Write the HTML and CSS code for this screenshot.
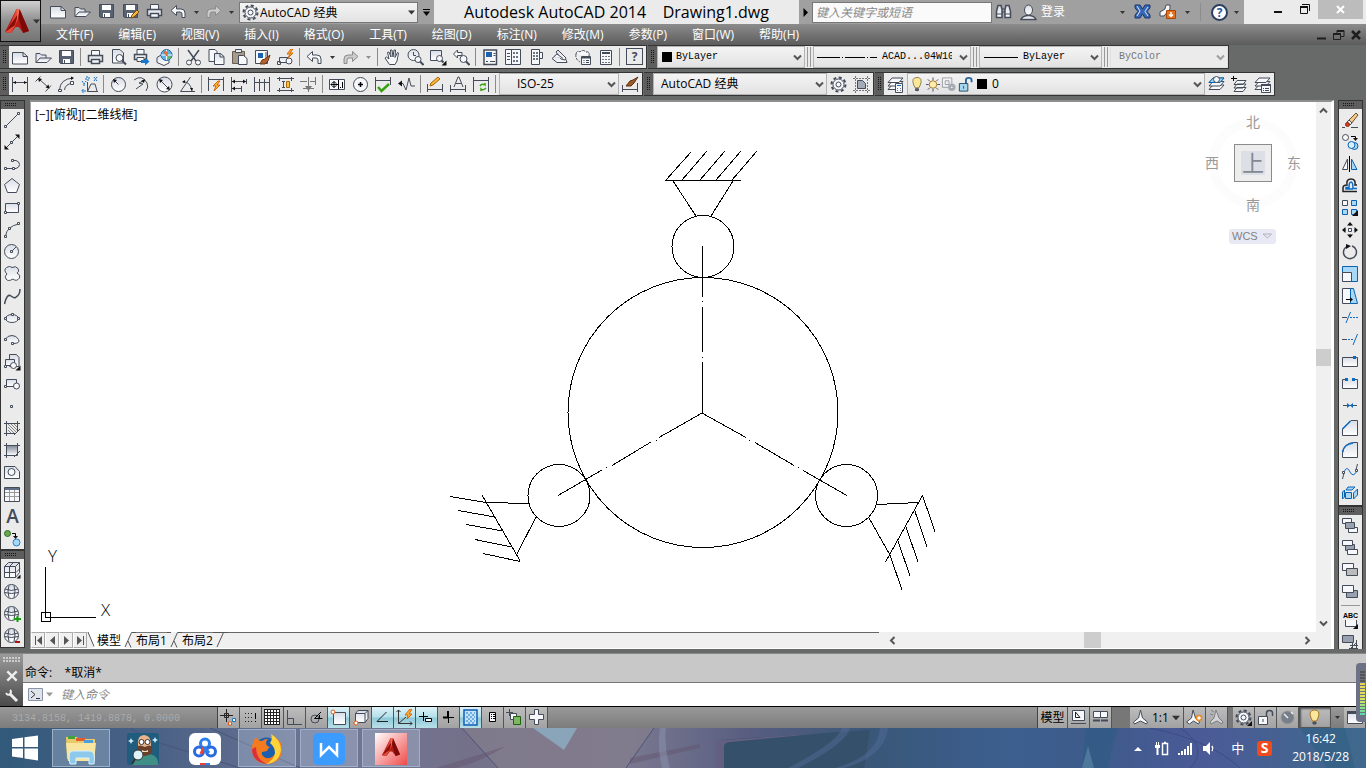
FILE: index.html
```
<!DOCTYPE html>
<html lang="zh-CN">
<head>
  <meta charset="UTF-8">
  <title>Autodesk AutoCAD 2014 Drawing1.dwg</title>
  <link rel="stylesheet" href="styles.css">
</head>
<body>

<!-- shared icons -->
<svg class="sprite" aria-hidden="true">
  <defs>
    <linearGradient id="paper" x1="0" y1="0" x2="0" y2="1"><stop offset="0" stop-color="#d8dde6"/><stop offset="1" stop-color="#fff"/></linearGradient>
    <linearGradient id="red" x1="0" y1="0" x2="1" y2="1"><stop offset="0" stop-color="#fff"/><stop offset="1" stop-color="#f04a4a"/></linearGradient>
    <linearGradient id="shade" x1="0" y1="0" x2="0" y2="1"><stop offset="0" stop-color="#7d8696"/><stop offset="1" stop-color="#fff"/></linearGradient>
  </defs>
  <symbol id="new" viewBox="0 0 17 17"><path class="p" d="M.5 3.500H11l4.500 4v7.500H.500z"/><path d="M11 3.500v4h4.500"/></symbol>
  <symbol id="open" viewBox="0 0 17 17"><path class="p" d="M1 13.500v-9h4l1.500 1.500H11v3"/><path class="p" d="M1 13.500 5 9h11.500L12 13.500z"/></symbol>
  <symbol id="save" viewBox="0 0 17 17"><path class="dk" d="M1.500 1.500h14v13h-13l-1-1z"/><path class="wh" d="M4 2h9v5H4z"/><path class="wh" d="M5 10h7v4H5z"/><path d="M6.500 11v3"/></symbol>
  <symbol id="print" viewBox="0 0 17 17"><path class="w" d="M4.500 6.500v-5h8v5"/><path class="p" stroke-width="1.500" d="M1.500 6.500h14v6h-14z"/><path class="w" stroke-width="1.500" d="M4.500 10.500h8v4h-8z"/></symbol>
  <symbol id="undo" viewBox="0 0 17 17"><path class="w" d="M1 7.500 6.500 2.500V6H11q4 0 4 4v4.500h-3V11q0-2-2-2H6.500v3.500z"/></symbol>
  <symbol id="redo" viewBox="0 0 17 17"><path d="M16 7.500 10.500 2.500V6H6Q2 6 2 10v4.500h3V11q0-2 2-2h3.500v3.500z" stroke="#8c8c8c" fill="#ccc"/></symbol>
  <symbol id="gear" viewBox="0 0 17 17"><circle cx="8.500" cy="8.500" r="7" stroke-width="2" stroke-dasharray="3 2.500"/><circle class="w" cx="8.500" cy="8.500" r="5.500"/><circle class="w" cx="8.500" cy="8.500" r="2.500"/></symbol>
  <symbol id="chev" viewBox="0 0 9 9"><path d="M1 2.500 4.500 6 8 2.500" stroke="#555" stroke-width="2" fill="none"/></symbol>
  <symbol id="tri" viewBox="0 0 7 7"><path d="M0 1.500h7L3.500 5.500z" fill="#333" stroke="none"/></symbol>
  <symbol id="layers" viewBox="0 0 17 17"><path class="w" d="M1 13.500 5 9h11l-4 4.500z"/><path class="w" d="M1 10 5 5.500h11L12 10z"/><path class="w" d="M1 6.500 5 2h11l-4 4.500z"/></symbol>
  <symbol id="globe" viewBox="0 0 17 17"><circle class="p" cx="7.500" cy="7.500" r="7"/><path d="M1 5q6.500 3 13 0M.5 8.500q7 2 14 0M5 1.500Q3 7 5 13.500M10 1.500q2 5.500 0 12"/></symbol>
  <symbol id="autocad" viewBox="0 0 32 32"><path d="M15.500 4 4 27l6 1 4.500-6h3l5 6L28 26 18.500 4z" fill="#b51a14"/><path d="M15.500 4 10 18l-6 9 6 1 5-9 3-9z" fill="#e2493a"/><path d="M17 9 4 27l10-7z" fill="#8c0c09"/><path d="M18.500 4 17 11l5 17 6-2z" fill="#7e0a08"/><path d="M15.500 4h3l-2 13z" fill="#f06a55"/></symbol>
</svg>

<header class="head">
  <button class="logo" aria-label="应用程序菜单"><svg class="logo-mark"><use href="#autocad"/></svg><svg class="tri"><use href="#tri"/></svg></button>
  <div class="head-bars">
    <div class="titlebar">
      <div class="quick">
        <button class="tool" aria-label="新建"><svg><use href="#new"/></svg></button>
        <button class="tool" aria-label="打开"><svg><use href="#open"/></svg></button>
        <button class="tool" aria-label="保存"><svg><use href="#save"/></svg></button>
        <button class="tool" aria-label="另存为"><svg><use href="#save"/><path d="m9 15 1-3 5-5 2 2-5 5z" fill="#f9b53a" stroke="#7a4a10"/></svg></button>
        <button class="tool" aria-label="打印"><svg><use href="#print"/></svg></button>
        <button class="tool" aria-label="放弃"><svg><use href="#undo"/></svg></button>
        <button class="drop" aria-label="放弃列表"><svg class="tri small"><use href="#tri"/></svg></button>
        <button class="tool" aria-label="重做"><svg><use href="#redo"/></svg></button>
        <button class="drop" aria-label="重做列表"><svg class="tri small"><use href="#tri"/></svg></button>
        <label class="combo combo-top">
          <svg class="ico"><use href="#gear"/></svg>
          <select aria-label="工作空间"><option>AutoCAD 经典</option></select>
          <svg class="tri"><use href="#tri"/></svg>
        </label>
        <button class="drop more" aria-label="自定义"><svg viewBox="0 0 9 9"><path d="M1 1.500h7" stroke="#000"/><path d="M1 3.500h7L4.500 8z" fill="#000" stroke="none"/></svg></button>
      </div>
      <h1 class="title">Autodesk AutoCAD 2014 &nbsp;&nbsp; Drawing1.dwg</h1>
      <div class="info">
        <button class="drop more" aria-label="展开"><svg viewBox="0 0 9 9"><path d="M2.500 0v9L7 4.500z" fill="#000" stroke="none"/></svg></button>
        <input class="search" type="text" placeholder="键入关键字或短语" aria-label="搜索">
        <button class="tool" aria-label="搜索"><svg viewBox="0 0 17 17"><path class="p" stroke-width="1.500" d="M3 2.500h3l1 4v8H1.500v-6zM11 2.500h3l1.500 6v6H10v-8z"/><path d="M7 6h3M7 9h3M2 11h5M10 11h5"/></svg></button>
        <button class="login"><svg viewBox="0 0 17 17"><path class="p" d="M1 15.500q1-3 6-4h3q5 1 6 4z" stroke-width="1.500"/><ellipse class="p" cx="8.500" cy="6" rx="4" ry="5"/></svg>登录</button>
        <button class="drop push" aria-label="登录菜单"><svg class="tri small"><use href="#tri"/></svg></button>
        <button class="tool exch" aria-label="Exchange"><svg viewBox="0 0 17 17"><path d="M1 2h5l2.500 4L11 2h5v3l-3 3.500 3 3.500v3h-5l-2.500-4L6 15H1v-3l3-3.500L1 5z" fill="#3567b5" stroke="#1a376f"/><path d="m3 3 3 5-3 5M14 4l-3 4.500 3 4.500" stroke="#dfe9f8"/></svg></button>
        <button class="tool" aria-label="更新"><svg viewBox="0 0 17 17"><path class="w" d="M7 2h4v4l-6 7H1V9l5-3z"/><path d="M7.500 7.500h9v8h-9z" fill="#e8701a" stroke="#a84808"/><path d="M12 9v4M10 11.500l2 2 2-2" stroke="#fff" stroke-width="1.500"/></svg></button>
        <button class="drop" aria-label="更新菜单"><svg class="tri small"><use href="#tri"/></svg></button>
        <span class="vline"></span>
        <button class="help" aria-label="帮助">?</button>
        <button class="drop helpdrop" aria-label="帮助菜单"><svg class="tri small"><use href="#tri"/></svg></button>
      </div>
      <div class="window-buttons">
        <button aria-label="最小化"><svg viewBox="0 0 17 17"><path d="M5 12h8" stroke-width="2"/></svg></button>
        <button aria-label="还原"><svg viewBox="0 0 17 17"><path d="M4.500 6.500h7v7h-7zM6 4.500h7.500V11"/><path d="M4 7h8" stroke-width="2"/></svg></button>
        <button class="close" aria-label="关闭"><svg viewBox="0 0 17 17"><path d="m5 6 7 7M12 6l-7 7" stroke="#fff" stroke-width="2"/></svg></button>
      </div>
    </div>
    <nav class="menubar">
      <button>文件(F)</button>
      <button>编辑(E)</button>
      <button>视图(V)</button>
      <button>插入(I)</button>
      <button>格式(O)</button>
      <button>工具(T)</button>
      <button>绘图(D)</button>
      <button>标注(N)</button>
      <button>修改(M)</button>
      <button>参数(P)</button>
      <button>窗口(W)</button>
      <button>帮助(H)</button>
      <span class="doc-buttons">
        <button aria-label="最小化图形"><svg viewBox="0 0 12 12"><path d="M1 9.500h9" stroke-width="2"/></svg></button>
        <button aria-label="还原图形"><svg viewBox="0 0 12 12"><path d="M.5 4.500h7v6h-7zM4 4V1.500h7v6H8"/><path d="M0 5h8M4 2h7" stroke-width="2"/></svg></button>
        <button aria-label="关闭图形"><svg viewBox="0 0 12 12"><path d="m2 2 8 8M10 2l-8 8" stroke-width="2.500"/></svg></button>
      </span>
    </nav>
  </div>
</header>

<div class="toolbars">
  <div class="toolrow">
    <div class="panel">
      <span class="grip"></span>
      <button class="tool" aria-label="新建"><svg><use href="#new"/></svg></button>
      <button class="tool" aria-label="打开"><svg><use href="#open"/></svg></button>
      <button class="tool" aria-label="保存"><svg><use href="#save"/></svg></button>
      <span class="sep"></span>
      <button class="tool" aria-label="打印"><svg><use href="#print"/></svg></button>
      <button class="tool" aria-label="打印预览"><svg viewBox="0 0 17 17"><path class="p" d="M2.500.5H10l3.500 3.500v10h-11z"/><circle class="w" cx="9.500" cy="9" r="3.500"/><path d="m12 11.500 4 4" stroke-width="2"/></svg></button>
      <button class="tool" aria-label="发布"><svg viewBox="0 0 17 17"><path class="w" d="M4 5V.5h7V5"/><path class="p" d="M1.500 5.500h12v5h-12z" stroke-width="1.500"/><path class="w" d="M4 8.500h7v4H4z"/><path d="M8 11h4V8.500l4.500 4-4.500 4V14H8z" fill="#1377cf" stroke="none"/></svg></button>
      <button class="tool" aria-label="三维打印"><svg viewBox="0 0 17 17"><path class="p" d="M1 8.500 5 6l8 3v5l-5 2.500-7-3z"/><circle cx="10.500" cy="6" r="5.500" fill="#58b4e6" stroke="#27679f"/><path d="M10.500 1v10M5 6h11" stroke="#fff"/><path d="M8 3h3v4z" fill="#f0c33a" stroke="#e24a1c"/><path d="M12 7.500h3v2h-3z" fill="#5fb54a" stroke="none"/></svg></button>
      <span class="sep"></span>
      <button class="tool" aria-label="剪切"><svg viewBox="0 0 17 17"><path d="m3 1 8 11M14 1 6 12" stroke-width="1.500"/><circle class="w" cx="4" cy="13.500" r="2.500"/><circle class="w" cx="13" cy="13.500" r="2.500"/></svg></button>
      <button class="tool" aria-label="复制"><svg viewBox="0 0 17 17"><path class="w" d="M1 .5h6l2 2v10H1z"/><path class="p" d="M6.500 4.500h6l3.500 3v8H6.500z"/><path d="M12 4.500V8h4"/></svg></button>
      <button class="tool" aria-label="粘贴"><svg viewBox="0 0 17 17"><path d="M1.500 2.500h12v12h-12z" fill="#a59b8d" stroke="#675d50"/><path class="p" d="M4.500.5h6v3h-6z"/><path class="w" d="M7.500 6.500h5l3.500 3v6H7.500z"/></svg></button>
      <button class="tool" aria-label="特性匹配"><svg viewBox="0 0 17 17"><path class="w" d="M1.500 1.500h12v13h-12z"/><path d="M4 4h5v5H4z" fill="#1c62ad" stroke="none"/><path d="M11 4h2M11 6h2M11 8h2"/><path d="m8 11 3-1 5-4-2 6-3 3H6z" fill="#b4622b" stroke="#6c3817"/></svg></button>
      <button class="tool" aria-label="块编辑器"><svg viewBox="0 0 17 17"><path class="p" d="M2.500 8.500h9v5h-9z"/><circle class="w" cx="12" cy="12" r="3"/><path d="M.5 12.500h3v3h-3z"/><path d="m14 0-4 5h3l-2 4 5-5h-3l3-4z" fill="#f9b53a" stroke="#d9650b"/></svg></button>
      <span class="sep"></span>
      <button class="tool" aria-label="放弃"><svg><use href="#undo"/></svg></button>
      <button class="drop" aria-label="放弃列表"><svg class="tri small"><use href="#tri"/></svg></button>
      <button class="tool" aria-label="重做"><svg><use href="#redo"/></svg></button>
      <button class="drop off" aria-label="重做列表"><svg class="tri small"><use href="#tri"/></svg></button>
      <span class="sep"></span>
      <button class="tool" aria-label="平移"><svg viewBox="0 0 17 17"><path class="w" d="M5.500 15.500 1 9l1.500-1L5 10 3.500 3.500 5 3l2 5-.5-7H8l1 7 1-7h1.500L11 8.500l2.500-5 1 .5L13 12l-2 3.500z"/></svg></button>
      <button class="tool" aria-label="实时缩放"><svg viewBox="0 0 17 17"><circle class="p" cx="6.500" cy="6" r="5.500"/><path d="M6.500 3v3.500H9"/><circle class="w" cx="11" cy="10.500" r="3"/><path d="m13 12.500 3.500 3.500" stroke-width="2"/></svg></button>
      <button class="tool" aria-label="窗口缩放"><svg viewBox="0 0 17 17"><path class="p" d="M.5 1.500h11v10H.500z"/><circle class="w" cx="9.500" cy="9.500" r="3"/><path d="m11.500 11.500 2 2" stroke-width="2"/><path class="k" d="M16.500 11.500v5h-5z"/></svg></button>
      <button class="tool" aria-label="缩放上一个"><svg viewBox="0 0 17 17"><path class="w" d="m.5 5 4-4v2.500H9v3H4.500V9z"/><circle class="w" cx="10.500" cy="10" r="3.500"/><path d="m13 12.500 3.500 3.500" stroke-width="2"/></svg></button>
      <span class="sep"></span>
      <button class="tool" aria-label="特性"><svg viewBox="0 0 17 17"><path class="w" stroke-width="1.500" d="M2 1h12.500v14.500H2z"/><path d="M4 3h6v5H4z" fill="#1c62ad" stroke="none"/><path d="M11.500 4.500h2M11.500 6.500h2M4 12.500h2M8 12.500h5"/></svg></button>
      <button class="tool" aria-label="设计中心"><svg viewBox="0 0 17 17"><path class="w" d="M.5.5h15v15H.500z"/><path d="M2 4.500h3M2 7.500h3M2 10.500h3M6.500 1v14"/><path class="s" d="M8 3h2v2H8zm3 0h2v2h-2zM8 7h2v2H8zm3 0h2v2h-2zM8 11h2v2H8zm3 0h2v2h-2z"/></svg></button>
      <button class="tool" aria-label="工具选项板"><svg viewBox="0 0 17 17"><path class="w" d="M3.500.5h8v15h-8zM11.500 3.500h3v6h-3z"/><path class="s" d="M5 3h2v2H5zm3 0h2v2H8zM5 6h2v2H5zm3 0h2v2H8zM5 9h2v2H5zm3 0h2v2H8z"/></svg></button>
      <button class="tool" aria-label="图纸集"><svg viewBox="0 0 17 17"><path class="p" d="M1 9.500 4 7l4 1 7 2.500 1 3H6z"/><path class="p" d="m5 3 2-2 8 8-1 2-4-1z"/><path class="w" d="M3 7.500 6 5l6 4.500"/></svg></button>
      <button class="tool" aria-label="标记集"><svg viewBox="0 0 17 17"><path class="w" stroke-dasharray="3 1" d="M2 5q1-4 4-2 3-3 6 0 4-1 3 4M2 5q-1 5 4 8"/><path class="w" d="M7.500 7.500h9v8h-9z"/><path d="M8 8.500h8" stroke-width="2"/><path d="M9.500 11.500h1M12 11.500h3M9.500 13.500h1M12 13.500h3"/></svg></button>
      <button class="tool" aria-label="快速计算器"><svg viewBox="0 0 17 17"><path class="w" d="M3.500 1.500h11v14h-11z"/><path d="M5 4h8" stroke-width="2"/><path class="s" d="M5 7h2v1H5zm3 0h2v1H8zm3 0h2v1h-2zM5 10h2v1H5zm3 0h2v1H8zm3 0h2v1h-2zM5 13h2v1H5zm3 0h2v1H8zm3 0h2v1h-2z"/></svg></button>
      <span class="sep"></span>
      <button class="tool boxed" aria-label="帮助">?</button>
    </div>

    <div class="panel">
      <span class="grip"></span>
      <label class="combo w-color"><span class="swatch"></span><select class="mono" aria-label="颜色"><option>ByLayer</option></select><svg class="chev"><use href="#chev"/></svg></label>
      <span class="dsep"></span>
      <label class="combo w-linetype"><svg class="dash" viewBox="0 0 60 3"><path d="M0 1.500h23M25 1.500h1M28 1.500h20M50 1.500h1M53 1.500h7"/></svg><select class="mono" aria-label="线型"><option>ACAD...04W100</option></select><svg class="chev"><use href="#chev"/></svg></label>
      <span class="dsep"></span>
      <label class="combo w-weight"><span class="line"></span><select class="mono" aria-label="线宽"><option>ByLayer</option></select><svg class="chev"><use href="#chev"/></svg></label>
      <span class="dsep"></span>
      <label class="combo w-plot"><select class="mono" aria-label="打印样式" disabled><option>ByColor</option></select><svg class="chev off"><use href="#chev"/></svg></label>
    </div>
  </div>

  <div class="toolrow">
    <div class="panel">
      <span class="grip"></span>
      <button class="tool" aria-label="线性"><svg viewBox="0 0 17 17"><path d="M.5 1v15M15.500 1v15M1 6.500h15"/><path class="k" d="M1 6.500 4 5v3zM15 6.500 12 5v3z"/></svg></button>
      <button class="tool" aria-label="对齐"><svg viewBox="0 0 17 17"><path d="m.5 5.500 5-5M10.500 15.500l5.500-6M4 3l10 9"/><path class="k" d="m3 2 4 1-3 3zM14.500 12.500l-4-1 3-3z"/></svg></button>
      <button class="tool" aria-label="弧长"><svg viewBox="0 0 17 17"><path d="M1.500 14Q2 3 15 2M6.500 14Q7 8 15 7"/><path class="w" d="M.5 13.500h3v2h-3zM12.500 5.500h3v3h-3z"/><path class="k" d="M13 .5 16 2l-3 2z"/></svg></button>
      <button class="tool" aria-label="坐标"><svg viewBox="0 0 17 17"><path d="M6.500 6v9.500H17M6.500 15.500 10 8h4M14 8l2 7"/><path class="bl" d="m1 5 2 3 2-3M3 8v3M13 1l3 4M16 1l-3 4M1 14h3v2H1zM5 1h3v3H5z" stroke-dasharray="2 1"/></svg></button>
      <span class="sep"></span>
      <button class="tool" aria-label="半径"><svg viewBox="0 0 17 17"><circle class="p" cx="8.500" cy="8.500" r="7"/><path d="M8.500 8.500 4 4"/><path class="k" d="m3 3 4 1-3 3z"/></svg></button>
      <button class="tool" aria-label="折弯"><svg viewBox="0 0 17 17"><path d="M1 4q8-6 13 3 2 4-1 8M3 13l7-5-4-1 6-3"/><path class="k" d="m12 3-1 4-3-2z"/></svg></button>
      <button class="tool" aria-label="直径"><svg viewBox="0 0 17 17"><circle class="p" cx="8.500" cy="8.500" r="7.500"/><path d="m4 4 9 9"/><path class="k" d="m3 3 4 1-3 3zM14 14l-4-1 3-3z"/></svg></button>
      <button class="tool" aria-label="角度"><svg viewBox="0 0 17 17"><path d="m11.500 1-10 14.500H16M4 6q7-1 9 9"/><path class="k" d="m3 6 3-2v3zM13 15l-2-3h3z"/></svg></button>
      <span class="sep"></span>
      <button class="tool" aria-label="快速标注"><svg viewBox="0 0 17 17"><path d="M.5 1v14M15.500 1v14M1 3.500h15"/><path d="m10 5-5 5h3l-2 5 6-6H9l3-4z" fill="#f9b53a" stroke="#d9650b"/></svg></button>
      <button class="tool" aria-label="基线"><svg viewBox="0 0 17 17"><path d="M.5 1v15M10.500 10v6M1 5.500h14M1 12.500h9M15.500 3v5"/><path class="k" d="m1 5.500 3-2v4zM1 12.500l3-2v4zM15 5.500l-3-2v4z"/></svg></button>
      <button class="tool" aria-label="连续"><svg viewBox="0 0 17 17"><path d="M.5 1v15M5.500 3v12M10.500 3v12M15.500 1v15M1 6.500h15"/></svg></button>
      <button class="tool" aria-label="等距标注"><svg viewBox="0 0 17 17"><path d="M0 2.500h17M0 14.500h17M2.500 1v4M14.500 1v4M2.500 12v4M14.500 12v4M5 5.500h3M6.500 5v7M5 11.500h3"/><path d="M9.500 5.500h3v6h-3z" fill="#f9c33a" stroke="#a86708"/></svg></button>
      <button class="tool" aria-label="折断标注"><svg viewBox="0 0 17 17"><path d="M0 5.500h7M10 5.500h6M15.500 1v8M8.500 1v15M3 12.500h11" stroke="#777"/><path d="m5 10 3.500 5L12 10z" fill="#777" stroke="none"/></svg></button>
      <span class="sep"></span>
      <button class="tool" aria-label="公差"><svg viewBox="0 0 17 17"><path class="w" d="M.5 3.500h15v10H.500z"/><circle cx="5" cy="8.500" r="2.500"/><path d="M5 5v7M1.500 8.500H9M9.500 4v9M11.500 11v1M13.500 6v6" stroke="#000"/></svg></button>
      <button class="tool" aria-label="圆心标记"><svg viewBox="0 0 17 17"><circle class="w" cx="8.500" cy="8.500" r="7"/><path d="M8.500 6v5M6 8.500h5" stroke="#000" stroke-width="1.500"/></svg></button>
      <button class="tool" aria-label="检验"><svg viewBox="0 0 17 17"><path d="M.5 1v14M15.500 1v8M1 4.500h15"/><path d="m3 11 3.500 4L14 8" stroke="#37a010" stroke-width="2.500"/></svg></button>
      <button class="tool" aria-label="折弯线性"><svg viewBox="0 0 17 17"><path d="M1 7.500h4L8 14l3-12 2 8h4"/><path class="k" d="m0 7.500 4-3v6z"/></svg></button>
      <span class="sep"></span>
      <button class="tool" aria-label="编辑标注"><svg viewBox="0 0 17 17"><path d="M.5 8v8M15.500 8v8M1 13.500h14"/><path d="m3 10 1-3 7-6 2 2-7 6z" fill="#f9b53a" stroke="#a86708"/></svg></button>
      <button class="tool" aria-label="编辑标注文字"><svg viewBox="0 0 17 17"><path d="M.5 9v7M15.500 9v7M1 13.500h14M4 11l4-10h1l4 10M6 7.500h5"/></svg></button>
      <button class="tool" aria-label="标注更新"><svg viewBox="0 0 17 17"><path d="M.5 1v15M15.500 1v15M1 4.500h14"/><path d="M7 10q2-3 5-1v-2M13 12q-3 3-5 1v2" stroke="#37a010" stroke-width="1.500"/></svg></button>
      <span class="sep"></span>
      <label class="combo w-dim"><select aria-label="标注样式"><option>ISO-25</option></select><svg class="chev"><use href="#chev"/></svg></label>
      <button class="tool" aria-label="标注样式管理"><svg viewBox="0 0 17 17"><path d="M.5 9v7M15.500 7v9M1 13.500h14"/><path d="m16 1-5 3-3 1-4 5h5l3-3z" fill="#9a5a2a" stroke="#5c3010"/></svg></button>
    </div>

    <div class="panel">
      <span class="grip"></span>
      <label class="combo w-space"><select aria-label="工作空间"><option>AutoCAD 经典</option></select><svg class="chev"><use href="#chev"/></svg></label>
      <button class="tool" aria-label="工作空间设置"><svg><use href="#gear"/></svg></button>
      <button class="tool" aria-label="我的工作空间"><svg viewBox="0 0 17 17"><path d="M0 2.500h17M0 14.500h17M2.500 0v17M14.500 0v17" stroke="#777" stroke-dasharray="2 1"/><path d="M4.500 4.500h5l3 3v5h-8z" fill="#a3abb8"/></svg></button>
    </div>

    <div class="panel">
      <span class="grip"></span>
      <button class="tool" aria-label="图层特性"><svg viewBox="0 0 17 17"><use href="#layers"/><path class="w" d="M8.500 7.500h7v9h-7z"/><path class="bl" d="M10 9.500h4"/><path class="s" d="M10 12h1v1h-1zm3 0h1v1h-1zm-3 2h1v1h-1zm3 0h1v1h-1z"/></svg></button>
      <label class="combo w-layer">
        <svg class="ico" viewBox="0 0 17 17"><path d="M5 9Q2 1 8.500 1T12 9l-1.500 3h-4z" fill="#fbe79a" stroke="#8a7a4a"/><path class="dk" d="M7 13h3v2H7z"/></svg>
        <svg class="ico" viewBox="0 0 17 17"><path d="M8.500 1v3M8.500 13v3M1 8.500h3M13 8.500h3M3 3l2 2M14 3l-2 2M3 14l2-2M14 14l-2-2"/><circle cx="8.500" cy="8.500" r="4" fill="#fdeeb0" stroke="#a5752a"/></svg>
        <svg class="ico faded" viewBox="0 0 17 17"><path class="w" d="M1.500 1.500h10v10h-10zM4.500 4.500h4v4h-4z"/><circle class="s" cx="11.500" cy="11.500" r="4"/><circle class="w" cx="11.500" cy="11.500" r="1.500"/></svg>
        <svg class="ico" viewBox="0 0 17 17"><path d="M9.500 8V4q0-2.500 3-2.500T15.500 4v2" stroke="#27679f" stroke-width="2"/><path d="M2.500 7.500h9v8h-9z" fill="#a8d8f0" stroke="#27475f"/><path d="M7 10v3"/></svg>
        <span class="swatch"></span>
        <select aria-label="图层"><option>0</option></select><svg class="chev"><use href="#chev"/></svg>
      </label>
      <button class="tool" aria-label="置为当前"><svg viewBox="0 0 17 17"><use href="#layers"/><path d="M1 6.500 5 2h11l-4 4.500z" fill="#9fd3ef" stroke="#0a63b0"/><circle class="w" cx="8.500" cy="3.500" r="3"/></svg></button>
      <button class="tool" aria-label="上一个图层"><svg viewBox="0 0 17 17"><path class="w" d="m3 15.500 3-4h9l-3 4zM3 12l3-4h9l-3 4zM3 8.500l3-4h9l-3 4z"/><path d="M0 2.500h6M2.500 0v5" stroke="#000"/></svg></button>
      <button class="tool" aria-label="图层状态"><svg viewBox="0 0 17 17"><use href="#layers"/><path class="w" d="M7.500 8.500h9v8h-9z"/><path d="M7 9h10" stroke-width="2"/><path d="M9 12.500h1M11 12.500h4M9 14.500h1M11 14.500h4"/></svg></button>
    </div>
  </div>
</div>

<main class="workspace">
  <aside class="side">
    <div class="panel vertical">
      <span class="grip"></span>
      <button class="tool" aria-label="直线"><svg viewBox="0 0 17 17"><path d="m2 14 12-12"/><path class="w" d="M.5 13.500h2v2h-2zM13.500.5h2v2h-2z"/></svg></button>
      <button class="tool" aria-label="构造线"><svg viewBox="0 0 17 17"><path d="M2 14 14 2"/><path class="w" d="M6.500 7.500h2v2h-2z"/><path class="k" d="M.5 11v4.500H5zM15.500 5V.500H11z"/></svg></button>
      <button class="tool" aria-label="多段线"><svg viewBox="0 0 17 17"><path d="M2 12.500h10q3.500-1 3.500-4T12 4.500H9"/><path class="w" d="M.5 11.500h2v2h-2zM8.500 11.500h2v2h-2zM7.500 3.500h2v2h-2z"/></svg></button>
      <button class="tool" aria-label="多边形"><svg viewBox="0 0 17 17"><path class="p" d="M8 .5 15.500 6.500 12.500 14.500h-9L.5 6.500z"/></svg></button>
      <button class="tool" aria-label="矩形"><svg viewBox="0 0 17 17"><path class="p" d="M1.500 3.500h13v9h-13z"/><path class="w" d="M.5 11.500h2v2h-2zM13.500 2.500h2v2h-2z"/></svg></button>
      <button class="tool" aria-label="圆弧"><svg viewBox="0 0 17 17"><path d="M1.500 14Q3 4 15 2"/><path class="w" d="M.5 13.500h2v2h-2zM4.500 5.500h2v2h-2zM13.500.5h2v2h-2z"/></svg></button>
      <button class="tool" aria-label="圆"><svg viewBox="0 0 17 17"><circle class="p" cx="7.500" cy="7.500" r="7"/><path d="m8 7 4-4"/><path class="w" d="M6.500 6.500h2v2h-2z"/></svg></button>
      <button class="tool" aria-label="修订云线"><svg viewBox="0 0 17 17"><path class="p" d="M3 8Q-1 4 2.500 1.500 6-1 8 1.500q4-2 6 1 2 3-1 4.500 4 2 2.500 5-3 4-6.500 1-5 3-7 0-2-3 1-5z"/></svg></button>
      <button class="tool" aria-label="样条曲线"><svg viewBox="0 0 17 17"><path d="M.5 16Q3 5 7 8t5 1q4-2 4-8" stroke-width="1.500"/></svg></button>
      <button class="tool" aria-label="椭圆"><svg viewBox="0 0 17 17"><ellipse class="p" cx="8" cy="8.500" rx="6.500" ry="4"/><path class="w" d="M.5 7.500h2v2h-2zM13.500 7.500h2v2h-2zM7.500 3.500h2v2h-2z"/></svg></button>
      <button class="tool" aria-label="椭圆弧"><svg viewBox="0 0 17 17"><path class="p" d="M1.500 7q2-3.500 6.500-3.500t6.500 4T9 11.500"/><path class="w" d="M.5 6.500h2v2h-2zM7.500 10.500h2v2h-2z"/></svg></button>
      <button class="tool" aria-label="插入块"><svg viewBox="0 0 17 17"><path class="p" d="M5.500.5h7l2.500 3v9H5.500z"/><path class="p" d="M1.500 5.500h9v6h-9z"/><circle class="w" cx="9.500" cy="11.500" r="3"/><path class="w" d="M.5 11.500h2v2h-2z"/><path class="k" d="M16.500 11.500v5h-5z"/></svg></button>
      <button class="tool" aria-label="创建块"><svg viewBox="0 0 17 17"><path class="p" d="M2.500 3.500h10v7h-10z"/><circle class="w" cx="12.500" cy="10" r="3"/><path class="w" d="M.5 9.500h2v2h-2z"/></svg></button>
      <button class="tool" aria-label="点"><svg viewBox="0 0 17 17"><path class="w" d="M6.500 7.500h2v2h-2z"/></svg></button>
      <button class="tool" aria-label="图案填充"><svg viewBox="0 0 17 17"><path d="m4 4 8 8M4 7l6 6M7 4l6 6M10 4l3 3M4 10l3 3" stroke="#888"/><path d="M2.500 1v15M13.500 1v11M0 3.500h16M0 13.500h11M10 15l6-6"/></svg></button>
      <button class="tool" aria-label="渐变色"><svg viewBox="0 0 17 17"><path d="M2.500 3.500h11v10h-11z" fill="url(#shade)"/><path d="M2.500 1v15M13.500 1v11M0 3.500h16M0 13.500h11M10 15l6-6"/></svg></button>
      <button class="tool" aria-label="面域"><svg viewBox="0 0 17 17"><path class="p" d="M.5 2.500H11l4.500 5v7H.500z"/><circle class="w" cx="7.500" cy="8" r="3.500"/></svg></button>
      <button class="tool" aria-label="表格"><svg viewBox="0 0 17 17"><path class="w" d="M.5 1.500h15v14H.500z"/><path d="M1 3h14" stroke-width="2" stroke="#607089"/><path d="M1 6.500h14M1 10.500h14M5.500 4v11M10.500 4v11" stroke="#999"/></svg></button>
      <button class="tool letter" aria-label="多行文字">A</button>
      <button class="tool" aria-label="添加选定对象"><svg viewBox="0 0 17 17"><circle cx="3.500" cy="3.500" r="3" fill="#6aa84f" stroke="#2f6a1f"/><circle cx="12.500" cy="12.500" r="3.500" fill="#a8d8f5" stroke="#2a80c9"/><path d="M8 3.500h3.500V7" stroke="#000"/><path class="k" d="M9 6h5l-2.500 3z"/></svg></button>
    </div>
    <div class="panel vertical">
      <span class="grip"></span>
      <button class="tool" aria-label="线框"><svg viewBox="0 0 17 17"><path class="p" d="M.5 4.500h11v11H.500zM.5 4.500 4.500.5h11l-4 4M15.500.5v10l-4 5M5.500 4.500v11M1 10.500h11l4-4M9.500.5l-4 4"/><path class="k" d="M16.500 12.500v4h-4z"/></svg></button>
      <button class="tool" aria-label="地理位置"><svg><use href="#globe"/></svg></button>
      <button class="tool" aria-label="添加光源"><svg viewBox="0 0 17 17"><use href="#globe"/><path d="M10 13h7M13.500 10v6" stroke="#18a010" stroke-width="2"/></svg></button>
      <button class="tool" aria-label="删除光源"><svg viewBox="0 0 17 17"><use href="#globe"/><path d="M11 14h5" stroke="#b01010" stroke-width="2"/></svg></button>
    </div>
  </aside>

  <section class="frame">
    <div class="view">
      <div class="canvas">
        <svg class="drawing" viewBox="31 102 1285 530" preserveAspectRatio="xMinYMin">
          <!-- main disc and axes -->
          <circle cx="703" cy="412.500" r="135"/>
          <path d="M702.500 246v51M702.500 301v1M702.500 307v45M702.500 357v1M702.500 362v51"/>
          <path d="m702 413-43 24.500M657 440h-1M651 442l-39 23.500M607 467.500h-1M602 470l-44 25.500"/>
          <path d="m702 413 44 24.500M749 440.500h1M755 442.500l39 23M798 467.500h1M803 470.500l44 25"/>
          <!-- top support -->
          <circle cx="703" cy="246.500" r="31"/>
          <path d="M665 180.500h76M673 181l23 35M733 181l-22 35"/>
          <path d="m666 180 25-28M682 180l25-29M700 180l25-29M716 180l25-29M732 180l25-29"/>
          <!-- left support -->
          <circle cx="559" cy="495.500" r="31"/>
          <path d="m482 495 38.500 66.500M529 503.500l-43-1M536 517l-19 37"/>
          <path d="m450 496.500 36 6M458 510.500l37 6.500M466 524.500l37 6.500M475 539.500l37 7.500M483 553.500l37 8"/>
          <!-- right support -->
          <circle cx="846.500" cy="495.500" r="31"/>
          <path d="m922.500 495.500-37 66.500M877 504.500l42-2M869 518l21 37"/>
          <path d="m922.500 495.500 12.500 36M915 511.500l12 35M906 527l12 35M898 541l12 35M890 555l12 35"/>
          <!-- user coordinate system -->
          <path d="M45.500 567v50.500H96M41.500 612.500h9v9h-9z"/>
          <text x="48" y="562">Y</text>
          <text x="101" y="616">X</text>
        </svg>
        <div class="view-label">[−][俯视][二维线框]</div>
        <div class="cube">
          <svg viewBox="0 0 100 102">
            <circle cx="50" cy="51" r="40"/>
            <rect x="31.500" y="32.500" width="37" height="37"/>
            <path d="M38 39h24v24H38z"/>
            <text class="face" x="50" y="59">上</text>
            <text x="50" y="15">北</text>
            <text x="50" y="98">南</text>
            <text x="9" y="56">西</text>
            <text x="91" y="56">东</text>
          </svg>
          <button class="wcs">WCS <svg viewBox="0 0 11 7"><path d="M1 1h8.500L5.500 5z"/></svg></button>
        </div>
      </div>
      <div class="scroll scroll-v">
        <button aria-label="向上"><svg viewBox="0 0 9 9"><path d="M1 6.500 4.500 3 8 6.500"/></svg></button>
        <span class="before"></span><span class="thumb"></span><span class="after"></span>
        <button aria-label="向下"><svg viewBox="0 0 9 9"><path d="M1 2.500 4.500 6 8 2.500"/></svg></button>
      </div>
    </div>
    <div class="tabs">
      <button class="nav" aria-label="第一个"><svg viewBox="0 0 9 9"><path d="M1.500 0v9" stroke="#555"/><path d="M8 0v9L3 4.500z"/></svg></button>
      <button class="nav" aria-label="上一个"><svg viewBox="0 0 9 9"><path d="M7 0v9L2 4.500z"/></svg></button>
      <button class="nav" aria-label="下一个"><svg viewBox="0 0 9 9"><path d="M2 0v9l5-4.500z"/></svg></button>
      <button class="nav" aria-label="最后一个"><svg viewBox="0 0 9 9"><path d="M7.500 0v9" stroke="#555"/><path d="M1 0v9l5-4.500z"/></svg></button>
      <svg class="edge" viewBox="0 0 10 16"><path class="white" d="M1 0h9v16H7z"/><path d="m1 0 6 14.500"/></svg>
      <button class="tab active">模型</button>
      <svg class="edge wide" viewBox="0 0 15 16"><path class="white" d="M0 0h11L4 16H0z"/><path d="M15 .5h-4.500L4 15M7 9l3 6.500"/></svg>
      <button class="tab">布局1</button>
      <svg class="edge wide" viewBox="0 0 15 16"><path d="M0 .5h4M15 .5h-4.500L4 15M7 9l3 6.500"/></svg>
      <button class="tab">布局2</button>
      <svg class="edge wide" viewBox="0 0 15 16"><path d="M0 .5h15M10.500.5 4 15"/></svg>
      <div class="tab-space"></div>
      <div class="scroll scroll-h">
        <button aria-label="向左"><svg viewBox="0 0 9 9"><path d="M6.500 1 3 4.500 6.500 8"/></svg></button>
        <span class="before"></span><span class="thumb"></span><span class="after"></span>
        <button aria-label="向右"><svg viewBox="0 0 9 9"><path d="M2.500 1 6 4.500 2.500 8"/></svg></button>
      </div>
      <span class="corner"></span>
    </div>
  </section>

  <aside class="side right">
    <div class="panel vertical">
      <span class="grip"></span>
      <button class="tool" aria-label="删除"><svg viewBox="0 0 17 17"><path d="m6 9 8-8 2 2-7 9z" fill="#f0c890" stroke="#70502a"/><path class="w" d="m5 10 3 3 2-2-3-3z"/><circle cx="5.500" cy="12.500" r="2" fill="#dc3d1c" stroke="#8c2410"/><path d="M0 15.500h3M9 15.500h7"/></svg></button>
      <button class="tool" aria-label="复制"><svg viewBox="0 0 17 17"><circle class="w" cx="3.500" cy="3.500" r="3"/><circle cx="12.500" cy="12" r="3.500" fill="#a8d8f5" stroke="#0a63b0"/><circle cx="9.500" cy="11" r="3.500" fill="#d8effb" stroke="#0a63b0"/><path d="M9 2.500h4.500V4" stroke="#000"/><path class="k" d="M11 4h5l-2.500 3z"/></svg></button>
      <button class="tool" aria-label="镜像"><svg viewBox="0 0 17 17"><path class="w" d="M5.500 3v10.500H.500z"/><path d="M9.500 3v10.500h5.500z" fill="#a8d8f5" stroke="#0a63b0"/><path d="M7.500 0v16" stroke="#000"/></svg></button>
      <button class="tool" aria-label="偏移"><svg viewBox="0 0 17 17"><path d="M15 13.500H1V10q0-3 4-3-1-6 4-6t4 6h2" stroke="#222" stroke-width="1.500"/><path class="bl" stroke-width="1.500" d="M15 10.500h-4Q11 4 9 4T7 9.500H4V11h7"/></svg></button>
      <button class="tool" aria-label="阵列"><svg viewBox="0 0 17 17"><path class="w" d="M.5.5h5v5h-5z"/><path d="M9.500.5h5v5h-5zM.5 9.500h5v5h-5zM9.500 9.500h5v5h-5z" fill="#a8d8f5" stroke="#0a63b0"/><path class="k" d="M16 10v6h-6z"/></svg></button>
      <button class="tool" aria-label="移动"><svg viewBox="0 0 17 17"><path class="w" d="M6.500 6.500h3v3h-3z"/><path d="M8 1v3M8 12v3M1 8h3M12 8h3"/><path class="k" d="m8 0 3 3.500H5zM8 16l3-3.500H5zM0 8l3.500-3v6zM16 8l-3.500-3v6z"/></svg></button>
      <button class="tool" aria-label="旋转"><svg viewBox="0 0 17 17"><path d="M4 3a6.500 6.500 0 1 0 6-1" stroke-width="1.500"/><path class="k" d="M4 0v5l5-3z"/></svg></button>
      <button class="tool" aria-label="缩放"><svg viewBox="0 0 17 17"><path d="M.5.5h15v15H.500z" fill="#a8d8f5" stroke="#0a63b0"/><path class="w" d="M.5 6.500h9v9h-9z"/></svg></button>
      <button class="tool" aria-label="拉伸"><svg viewBox="0 0 17 17"><path class="w" d="M.5.5h8v15h-8z"/><path d="M8.500.5h3l4 15h-7z" fill="#a8d8f5" stroke="#0a63b0"/><path d="M4 11.500h5" stroke="#000"/><path class="k" d="m8 9 3 2.500L8 14z"/></svg></button>
      <button class="tool" aria-label="修剪"><svg viewBox="0 0 17 17"><path d="M0 7.500h5"/><path class="bl" d="M8.500 2 4 13M8 7.500h2M11 7.500h2M14 7.500h2"/></svg></button>
      <button class="tool" aria-label="延伸"><svg viewBox="0 0 17 17"><path d="M0 7.500h5"/><path class="bl" d="M6 7.500h2M9 7.500h2M15.500 2 11 13"/></svg></button>
      <button class="tool" aria-label="打断于点"><svg viewBox="0 0 17 17"><path class="p" d="M11 3.500H.5v9h15v-9H14"/><path class="blf" d="M11 2h3v3h-3z"/></svg></button>
      <button class="tool" aria-label="打断"><svg viewBox="0 0 17 17"><path class="p" d="M3 3.500H.5v9h15v-9H13"/><path class="blf" d="M3 2h3v3H3zM10 2h3v3h-3z"/></svg></button>
      <button class="tool" aria-label="合并"><svg viewBox="0 0 17 17"><path d="M1 7.500h14"/><path class="blf" d="m5 5 3 2.500L5 10zM11 5 8 7.500l3 2.500z"/></svg></button>
      <button class="tool" aria-label="倒角"><svg viewBox="0 0 17 17"><path class="p" d="M.5 9v6.500h15V.500H9z"/><path class="bl" stroke-width="1.500" d="m.5 9 8-8"/></svg></button>
      <button class="tool" aria-label="圆角"><svg viewBox="0 0 17 17"><path class="p" d="M.5 11v4.500h15V.500H12Q2 1 .5 11z"/><path class="bl" stroke-width="1.500" d="M.5 10Q2 2 11 1"/></svg></button>
      <button class="tool" aria-label="光顺曲线"><svg viewBox="0 0 17 17"><path class="bl" d="M2 8q3-7 6 0 3 6 7-1"/><path d="M.5 15 2 9M14 6l1.500-6"/><path class="w" d="M.5 7.500h2v2h-2zM13.500 5.500h2v2h-2z"/></svg></button>
      <button class="tool" aria-label="分解"><svg viewBox="0 0 17 17"><path d="M3.500 6.500h6v6h-6zM4 4l2-3h7l-3 3zM11.500 7l4-4v6l-4 4zM.5 6l2-2v7l-2 2z" fill="#a8d8f5" stroke="#0a63b0"/></svg></button>
    </div>
    <div class="panel vertical">
      <span class="grip"></span>
      <button class="tool" aria-label="前置"><svg viewBox="0 0 17 17"><path class="w" d="M.5.5h9v5h-9zM6.500 9.500h9v5h-9z"/><path d="M3.500 4.500h9v6h-9z" fill="#99a1b0"/></svg></button>
      <button class="tool" aria-label="后置"><svg viewBox="0 0 17 17"><path d="M3.500 4.500h9v6h-9z" fill="#99a1b0"/><path class="w" d="M.5.5h10v5H.500zM5.500 9.500h10v5h-10z"/></svg></button>
      <button class="tool" aria-label="置于对象之上"><svg viewBox="0 0 17 17"><path class="w" d="M.5 1.500h11v7H.500z"/><path d="M4.500 6.500h11v7h-11z" fill="#bbb"/></svg></button>
      <button class="tool" aria-label="置于对象之下"><svg viewBox="0 0 17 17"><path d="M4.500 6.500h11v7h-11z" fill="#99a1b0"/><path class="w" d="M.5 1.500h11v7H.500z"/></svg></button>
      <span class="hsep"></span>
      <button class="tool abc" aria-label="文字前置"><span>ABC</span><svg viewBox="0 0 17 9"><path class="w" d="M3.500 0v6.500h11V0"/><path class="k" d="M16 4v5h-5z"/></svg></button>
      <button class="tool" aria-label="图案填充后置"><svg viewBox="0 0 17 17"><path d="M.5 1.500h11v7H.500z" fill="#99a1b0"/><path d="M7 14.500h9M14.500 6v10M8 11.500h8M10.500 9v7M8 15l7-7"/></svg></button>
    </div>
  </aside>
</main>

<section class="command">
  <div class="command-grip">
    <span class="grip"></span>
    <button aria-label="关闭命令行"><svg viewBox="0 0 12 12"><path d="m2 2 8 8M10 2l-8 8"/></svg></button>
    <button aria-label="自定义命令行"><svg viewBox="0 0 14 14"><path d="m5 5 7 7" stroke-width="3"/><path d="M1 4q2 3 4 1 2-2 0-4" stroke-width="2"/></svg></button>
  </div>
  <div class="command-body">
    <p class="history">命令:&nbsp;&nbsp;&nbsp; *取消*</p>
    <div class="prompt">
      <button class="prompt-icon" aria-label="最近使用的命令"><svg viewBox="0 0 15 13"><path d="M.5.5h14v12H.500z" fill="#dfe3ea" stroke="#8a94a6"/><path d="m3 3 4 3.500L3 10M8 10.500h4" stroke="#333"/></svg><svg class="tri off"><use href="#tri"/></svg></button>
      <input type="text" placeholder="键入命令" aria-label="命令">
    </div>
  </div>
</section>

<footer class="status">
  <span class="coords">3134.8158, 1419.8878, 0.0000</span>
  <button class="toggle" aria-label="推断约束"><svg viewBox="0 0 17 17"><path d="M6.500 0v13M0 6.500h13M4.500 4.500h4v4h-4z" stroke="#222"/><path d="M12.500 9.500h3v3h-3z" fill="#fff" stroke="#1377cf"/><path d="M8.500 13h3v3h-3z" fill="#fff" stroke="#e05a1c"/></svg></button>
  <button class="toggle" aria-label="捕捉模式"><svg viewBox="0 0 17 17"><path d="M3 4.500h9M3 8.500h9M3 12.500h9" stroke="#222" stroke-dasharray="1 2"/><path d="M13.500 4v6M13.500 12v1" stroke="#000"/></svg></button>
  <button class="toggle" aria-label="栅格显示"><svg viewBox="0 0 17 17"><path class="wh" d="M1 1h15v15H1z"/><path d="M.5 1v15M3.500 1v15M6.500 1v15M9.500 1v15M12.500 1v15M15.500 1v15M0 .5h16M1 3.500h15M1 6.500h15M1 9.500h15M1 12.500h15M0 15.500h16" stroke="#222"/></svg></button>
  <button class="toggle" aria-label="正交模式"><svg viewBox="0 0 17 17"><path d="M1.500 1v14.500H16M1.500 9.500h6v6"/></svg></button>
  <button class="toggle" aria-label="极轴追踪"><svg viewBox="0 0 17 17"><circle cx="7" cy="10" r="4"/><path d="M13 3 6.500 9.500h8M11.500 6v4" stroke="#000"/></svg></button>
  <button class="toggle on" aria-label="对象捕捉"><svg viewBox="0 0 17 17"><path class="p" d="M3.500 3.500h12v12h-12z"/><circle cx="3" cy="3" r="2" fill="#fff" stroke="#e05a1c"/></svg></button>
  <button class="toggle" aria-label="三维对象捕捉"><svg viewBox="0 0 17 17"><path class="p" d="M3.500 4.500 6 1.500h10v8l-3 4H3.500z"/><path d="M3.500 4.500H13v9M13 4.500l3-3"/><circle cx="4" cy="14" r="2" fill="#fff" stroke="#e05a1c"/></svg></button>
  <button class="toggle on" aria-label="对象捕捉追踪"><svg viewBox="0 0 17 17"><path d="M12.500 3 3 12.500h11" stroke="#222"/></svg></button>
  <button class="toggle on" aria-label="动态UCS"><svg viewBox="0 0 17 17"><path d="M2.500 1v13.500H16M2.500 14.500 10 8M.5 3l2-2 2 2M14 12.500l2 2-2 2" stroke="#333"/><path d="m14 0-5 6h3l-1 4 5-5h-3l3-5z" fill="#f9b53a" stroke="#d9650b"/></svg></button>
  <button class="toggle on" aria-label="动态输入"><svg viewBox="0 0 17 17"><path d="M5.500 3v9M1 7.500h9" stroke="#000"/><path class="w" stroke="#000" d="M7.500 9.500h6v3h-6z"/></svg></button>
  <button class="toggle" aria-label="线宽"><svg viewBox="0 0 17 17"><path d="M8 2v7M3 8.500h6" stroke="#000" stroke-width="2"/><path d="M8.500 9v5M9 8.500h5" stroke="#000"/></svg></button>
  <button class="toggle on" aria-label="透明度"><svg viewBox="0 0 17 17"><path d="M2 1h13v15H2z" fill="#c5e2f4" stroke="#0f5fb5" stroke-width="1.500"/><path d="M4 4h9M4 8h9M4 12h9" stroke="#6faee0" stroke-width="2" stroke-dasharray="2 2"/><path d="M6 6h8M6 10h8M6 14h8" stroke="#6faee0" stroke-width="2" stroke-dasharray="2 2"/></svg></button>
  <button class="toggle" aria-label="快捷特性"><svg viewBox="0 0 17 17"><path class="w" stroke="#000" d="M5.500 3.500h6v9h-6z"/><path d="M7 5.500h1M9 5.500h2M7 7.500h1M9 7.500h2M7 9.500h1M9 9.500h2" stroke="#000"/></svg></button>
  <button class="toggle" aria-label="选择循环"><svg viewBox="0 0 17 17"><path d="M3.500 0v7M0 3.500h7"/><path class="w" d="M4.500 4.500h6v6h-6z"/><path d="M7.500 7.500h7v8h-7z" fill="#7db560" stroke="#1b6410"/></svg></button>
  <button class="toggle" aria-label="注释监视器"><svg viewBox="0 0 17 17"><path class="w" d="M6.500.5h4v5h5v5h-5v5h-4v-5h-5v-5h5z"/></svg></button>
  <span class="status-space"></span>
  <button class="toggle model">模型</button>
  <button class="toggle" aria-label="快速查看布局"><svg viewBox="0 0 17 17"><path class="w" d="M2.500 1.500h12v10h-12z"/><path d="M5.500 3v5.500H10z" stroke="#222"/><path d="M1 14.500h15"/></svg></button>
  <button class="toggle" aria-label="快速查看图形"><svg viewBox="0 0 17 17"><path class="w" d="M1.500 2.500h7v6h-7zM8.500 2.500h7v6h-7z"/><path d="M1 11.500h7M9 11.500h7" stroke-width="2"/></svg></button>
  <span class="status-gap"></span>
  <button class="toggle scale"><svg viewBox="0 0 17 17"><path class="w" d="M8.500 1 10.500 9l5 4-1 2-6-3-6 3-1-2 5-4z"/></svg>1:1<svg class="tri"><use href="#tri"/></svg></button>
  <button class="toggle" aria-label="注释可见性"><svg viewBox="0 0 17 17"><path class="w" d="m7 1 2.500 8 4 4-1 2-5-3-4 3-3-2 5-4z"/><circle cx="13" cy="9" r="2.500" fill="#fff" stroke="#f08a1c" stroke-width="1.500"/></svg></button>
  <button class="toggle" aria-label="自动添加比例"><svg class="faded" viewBox="0 0 17 17"><path class="w" d="m8 1 3 8 4 4-1 2-5-3-6 3-1-2 4-4z"/><path d="m3 1 3 2M2 5l3 1"/></svg></button>
  <span class="status-gap small"></span>
  <button class="toggle" aria-label="切换工作空间"><svg viewBox="0 0 17 17"><use href="#gear"/><path class="k" d="M17 12v5h-5z"/></svg></button>
  <button class="toggle" aria-label="锁定"><svg viewBox="0 0 17 17"><path d="M9.500 8V4q0-2.500 3-2.500T15.500 4v3" stroke-width="1.500"/><path class="w" d="M1.500 7.500h9v8h-9z"/><path d="M6 10v3"/></svg></button>
  <button class="toggle" aria-label="硬件加速"><svg viewBox="0 0 17 17"><circle cx="8.500" cy="8.500" r="6.500" fill="#777f89" stroke="#999"/><path d="m5 5 4 4M12 3l2 2" stroke="#eee" stroke-width="1.500"/></svg></button>
  <button class="toggle isolate" aria-label="隔离对象"><svg viewBox="0 0 17 17"><path d="M5 9Q2 1 8.500 1T12 9l-1.500 3h-4z" fill="#fbe79a" stroke="#a5752a"/><path class="dk" d="M7 13h3v2H7z"/></svg></button>
  <button class="drop" aria-label="状态栏菜单"><svg class="tri small"><use href="#tri"/></svg></button>
  <button class="toggle" aria-label="全屏显示"><svg viewBox="0 0 17 17"><path class="p" d="M1.500 2.500h15v12h-15z"/><path d="M1 3.500h15" stroke-width="3"/></svg></button>
</footer>

<div class="meter"></div>

<footer class="taskbar">
  <svg class="wallpaper" viewBox="0 0 1366 40" preserveAspectRatio="none" aria-hidden="true">
    <path d="M462 0h192l-28 40H498z" fill="#827c8c" opacity=".8"/>
    <path d="M533 0h44l-13 22z" fill="#8fb7cc" opacity=".7"/>
    <path d="M436 40q30-9 70-22-26 16-50 22zM630 30l70-14v4l-70 16z" fill="#624f68" opacity=".4"/>
    <path d="M660 0h6q-2 20 4 40h-8q-5-20-2-40z" fill="#8d93b0" opacity=".5"/>
    <path d="M720 40V12l150-10-6 38z" fill="#34506b"/>
    <path d="M715 40V16q0-4 8-4l100-7-92 9q-7 0-7 5v21z" fill="#625f80"/>
    <path d="M880 0q-2 28-45 40h10q40-12 43-40zM842 0q-4 14-54 40h10q48-24 52-40z" fill="#5a70a0" opacity=".4"/>
    <path d="M1082 40l6-22 6 22z" fill="#7aa0bc" opacity=".7"/>
    <path d="M130 0l20 12 90 28M210 0l50 22 40 18M462 0l36 40M654 0l-28 40" fill="none" stroke="#4a5576"/>
    <path d="M1150 0q60 12 90 40M1180 0q30 20 10 40" fill="none" stroke="#3d4c88"/>
    <path d="M1086 0h32q-8 24-10 40h-26zM1300 0h45l10 40h-28z" fill="#255d7f" opacity=".4"/>
  </svg>
  <button class="start" aria-label="开始"><svg viewBox="0 0 26 26"><path d="m0 4 11-1.500V12H0zM12.500 2.300 26 .5V12H12.500zM0 13.500h11V23L0 21.500zM12.500 13.500H26v12l-13.500-2z"/></svg></button>
  <button class="app open" aria-label="文件资源管理器"><svg viewBox="0 0 32 32"><path d="M1 4h11l2 2h16v20H2z" fill="#e9ca69"/><path d="M3 3h7v3H3z" fill="#42a23f"/><path d="M11 5h9v3h-9z" fill="#e55b2e"/><path d="M19 7h9v3h-9z" fill="#4c9ddc"/><path d="M1 10h30l-2 18H3z" fill="#f8e5a0"/><path d="M5 31q-3-13 3-13h17q6 0 4 13h-5v-6H11v6z" fill="#8cc9ec" stroke="#d9f0fb"/></svg></button>
  <button class="app" aria-label="游戏"><svg viewBox="0 0 32 32"><rect width="32" height="32" rx="3" fill="#1f5c7e"/><path d="m4 5 1 2 2 1-2 1-1 2-1-2-2-1 2-1zM28 4l1 2 2 1-2 1-1 2-1-2-2-1 2-1z" fill="#cfe9f5"/><path d="M5 32q1-11 14-11t12 11z" fill="#3f8f86"/><path d="M11 12q-1-10 6-10t7 10v5H11z" fill="#eab48b"/><path d="M10 14q2-3 8 0 5-3 7 0 2 8-7 9-8-1-8-9z" fill="#6b4028"/><path d="M15 17q3 2 6 0v2h-6z" fill="#f3d7c0"/><circle cx="14.500" cy="9" r="2.500" fill="#fff" stroke="#333"/><circle cx="20.500" cy="9" r="2.500" fill="#fff" stroke="#333"/><circle cx="11" cy="22" r="5" fill="#dff2fa" stroke="#333"/><path d="m8 26-3 5" stroke="#333" stroke-width="2"/></svg></button>
  <button class="app" aria-label="百度网盘"><svg viewBox="0 0 32 32"><rect width="32" height="32" rx="6" fill="#fff"/><g fill="none" stroke-width="3"><circle cx="16" cy="10.500" r="4.500" stroke="#2a80ee"/><circle cx="10" cy="18.500" r="4.500" stroke="#2a6be0"/><circle cx="22" cy="18.500" r="4.500" stroke="#2a6be0"/><path d="m12 21 3-7" stroke="#e8413c"/><path d="m15 14 5 6" stroke="#2a80ee"/></g><path d="M11 30h5v2h-5z" fill="#e8413c"/><path d="M16 30h5v2h-5z" fill="#2a80ee"/></svg></button>
  <button class="app open" aria-label="Firefox"><svg viewBox="0 0 32 32"><circle cx="15.500" cy="16.500" r="12" fill="#1b5fae"/><path d="M5 4q-4 5-4 12 0 14 15 15 14-1 15-14 0-9-6-12 3 7 0 14-3 7-10 6-5-2-4-6l5-1q1-3 3-4-4-1-4-4 0-2 2-4-4 0-6 2-4 0-6-4z" fill="#f37a1e"/><path d="M20 1q10 6 10 16-2 13-15 14 8-4 9-11 0-6-5-10 3-4 1-9z" fill="#ffd43a"/><path d="M1 16q0 13 15 15Q5 27 5 14z" fill="#dc2f3e"/></svg></button>
  <button class="app open" aria-label="WPS"><svg viewBox="0 0 32 32"><rect width="32" height="32" rx="5" fill="#3b9bff"/><path d="M8 10v12l8-8 8 8V10" fill="none" stroke="#fff" stroke-width="2.500"/></svg></button>
  <button class="app open" aria-label="AutoCAD"><svg viewBox="0 0 32 32"><path d="M0 0h32v32H0z" fill="url(#red)"/><use href="#autocad" x="4" y="2" width="24" height="24"/></svg></button>
  <div class="tray">
    <button aria-label="显示隐藏的图标"><svg viewBox="0 0 17 17"><path d="M5 11h8L9 7z"/></svg></button>
    <button aria-label="电源"><svg viewBox="0 0 17 17"><path d="M9.500 3.500h5v11h-5zM11 2.500h2" fill="none" stroke="#fff" stroke-width="1.500"/><path d="M2 5h5v3H5.500v7h-2V8H2zM3 2h1v3H3zM5 2h1v3H5z"/></svg></button>
    <button aria-label="网络"><svg viewBox="0 0 17 17"><path d="M1 13h2v2H1zM4 11h2v4H4zM7 9h2v6H7zM10 6h2v9h-2zM13 3h2v12h-2z"/></svg></button>
    <button aria-label="音量"><svg viewBox="0 0 17 17"><path d="M2 6h3l4-4v13l-4-4H2z"/><path d="M11 6q1.500 2.500 0 5" fill="none" stroke="#fff" stroke-width="1.500"/></svg></button>
    <button class="ime">中</button>
    <button class="sogou" aria-label="搜狗输入法">S</button>
    <button class="clock"><span>16:42</span><span>2018/5/28</span></button>
  </div>
</footer>

</body>
</html>
```

FILE: styles.css
```
* {
  box-sizing: border-box;
}

body {
  margin: 0;
  height: 100vh;
  display: flex;
  flex-direction: column;
  overflow: hidden;
  position: relative;
  background: #686a69;
  color: #000;
  font: 12px/16px 'Open Sans', 'Noto Sans CJK SC', sans-serif;
}

button,
input,
select {
  margin: 0;
  padding: 0;
  border: 0;
  border-radius: 0;
  background: none;
  color: inherit;
  font: inherit;
}

svg {
  display: block;
  flex: none;
  fill: none;
  stroke: #454c59;
}

.sprite {
  position: absolute;
  width: 0;
  height: 0;
}

/* icon paint */
.p { fill: url(#paper); }
.w { fill: #f6f8fb; }
.wh { fill: #fff; stroke: none; }
.dk { fill: #596273; }
.k { fill: #111; stroke: none; }
.s { fill: #6b7483; stroke: none; }
.bl { stroke: #0a6cc4; }
.blf { fill: #0a6cc4; stroke: none; }
.faded { opacity: 0.5; }

.tool {
  width: 23px;
  height: 22px;
  padding: 3px 3px 2px;
  flex: none;
}

.tool svg,
.ico {
  width: 17px;
  height: 17px;
}

.drop {
  width: 13px;
  flex: none;
  display: flex;
  align-items: center;
  justify-content: center;
}

.tri {
  width: 7px;
  height: 7px;
}

.tri.small {
  width: 5px;
  height: 5px;
}

.off {
  opacity: 0.5;
}

/* title bar */
.head {
  display: flex;
  flex: none;
  height: 45px;
  background: #5c5c5c;
}

.logo {
  width: 41px;
  height: 42px;
  flex: none;
  display: flex;
  align-items: center;
  border: 1px solid #111;
  background: linear-gradient(#cfcfcf, #8f8f8f 50%, #757575);
}

.logo-mark {
  width: 32px;
  height: 32px;
  stroke: none;
}

.head-bars {
  flex: 1;
  min-width: 0;
}

.titlebar {
  display: flex;
  height: 24px;
  background: #ebebeb;
}

.quick,
.info {
  display: flex;
  flex: none;
  background: #a0a0a0;
}

.quick {
  padding-left: 6px;
}

.quick .tool {
  width: 24px;
}

.quick .drop {
  width: 11px;
}

.combo {
  display: flex;
  align-items: center;
  flex: none;
  height: 22px;
  border: 1px solid #b4b4b4;
  background: linear-gradient(#f4f4f4, #e2e2e2);
}

.combo select {
  appearance: none;
  flex: 1;
  min-width: 0;
  overflow: hidden;
}

.combo-top {
  width: 179px;
  height: 21px;
  margin: 2px 0 0 2px;
  padding: 0 2px;
  border-color: #777;
}

.combo-top select {
  padding-left: 1px;
}

.chev {
  width: 9px;
  height: 9px;
  margin: 0 2px;
}

.more svg {
  width: 9px;
  height: 9px;
}

.quick .more {
  width: 16px;
}

.title {
  flex: 1;
  margin: 0;
  text-align: center;
  white-space: nowrap;
  font-size: 16px;
  font-weight: 400;
  line-height: 25px;
}

.info {
  width: 445px;
}

.info .tool {
  width: 25px;
}

.search {
  width: 180px;
  height: 21px;
  margin-top: 2px;
  padding-left: 3px;
  border: 1px solid #777;
  background: #fafafa;
}

input::placeholder {
  color: #888;
  font-style: italic;
  opacity: 1;
}

.login {
  display: flex;
  align-items: center;
  gap: 4px;
  padding-left: 3px;
  color: #fff;
}

.login svg {
  width: 17px;
  height: 17px;
}

.push {
  margin-left: auto;
}

.info .exch {
  margin-left: 2px;
}

.vline {
  width: 1px;
  margin: 3px 10px 3px 6px;
  background: #8c8c8c;
}

.help {
  width: 17px;
  height: 17px;
  margin-top: 4px;
  border: 2px solid #2c3f60;
  border-radius: 50%;
  background: #fff;
  color: #1c55a8;
  font-weight: 700;
  line-height: 13px;
}

.info .helpdrop {
  width: 16px;
}

.window-buttons {
  display: flex;
  flex: none;
  width: 122px;
  padding: 0 3px 0 20px;
}

.window-buttons button {
  width: 27px;
  height: 19px;
  display: flex;
  justify-content: center;
}

.window-buttons svg {
  width: 17px;
  height: 17px;
  stroke: #111;
}

.window-buttons .close {
  flex: 1;
  background: #bcbcbc;
}

.menubar {
  display: flex;
  height: 21px;
  padding-left: 15px;
  gap: 25px;
  background: linear-gradient(#8c8c8c, #5c5c5c);
  color: #fff;
  line-height: 20px;
  white-space: nowrap;
}

.doc-buttons {
  display: flex;
  align-items: center;
  gap: 5px;
  margin-left: auto;
  padding-right: 4px;
}

.doc-buttons svg {
  width: 12px;
  height: 12px;
  stroke: #1e1e1e;
}

/* horizontal toolbars */
.toolbars {
  flex: none;
  display: flex;
  flex-direction: column;
  gap: 3px;
  padding-bottom: 4px;
}

.toolrow {
  display: flex;
  gap: 1px;
}

.panel {
  display: flex;
  flex: none;
  border: 1px solid #343434;
  border-left: 0;
  background: #ebebeb;
}

.grip {
  width: 9px;
  flex: none;
  padding: 4px 3px;
  background-color: #5e5e5e;
  background-image: linear-gradient(90deg, #5e5e5e 1px, transparent 1px), linear-gradient(#161616 1px, #5e5e5e 1px);
  background-size: 2px 2px;
  border: solid #5e5e5e;
  border-width: 4px 3px 4px 2px;
  padding: 0;
}

.sep {
  width: 6px;
  flex: none;
  border: solid #ebebeb;
  border-width: 2px 3px 2px 2px;
  background: #8a8a8a;
}

.dsep {
  width: 8px;
  border: solid #ebebeb;
  border-width: 1px 2px;
  background: linear-gradient(90deg, #999 1px, #ebebeb 1px 3px, #999 3px);
}

.boxed {
  height: 17px;
  width: 17px;
  margin: 2px 3px;
  padding: 0;
  border: 1px solid #454c59;
  color: #454c59;
  font-weight: 700;
  line-height: 14px;
}

.mono {
  font: 10px/16px 'Liberation Mono', monospace;
}

.swatch {
  width: 10px;
  height: 10px;
  background: #000;
}

.w-color {
  width: 148px;
  padding-left: 4px;
  gap: 4px;
}

.w-linetype {
  width: 158px;
  padding-left: 3px;
  gap: 5px;
}

.dash {
  width: 60px;
  height: 3px;
  stroke: #000;
}

.w-weight {
  width: 123px;
  padding-left: 4px;
  gap: 5px;
}

.line {
  width: 34px;
  height: 1px;
  background: #000;
}

.w-plot {
  width: 118px;
  padding-left: 8px;
  border-color: #e0e0e0;
  background: #ebebeb;
}

.w-plot select {
  color: #777;
  opacity: 1;
}

.w-dim {
  width: 120px;
  padding-left: 17px;
}

.w-space {
  width: 174px;
  padding-left: 7px;
}

.w-layer {
  width: 298px;
  padding-left: 1px;
}

.w-layer .swatch {
  margin: 0 5px 0 4px;
}

.w-layer .ico {
  width: 16px;
}

/* side toolbars and drawing area */
.workspace {
  flex: 1;
  min-height: 0;
  display: flex;
  overflow: hidden;
}

.side {
  flex: none;
  width: 25px;
  margin-right: 5px;
}

.side.right {
  margin: 0 3px 0 4px;
}

.vertical {
  flex-direction: column;
  border-left: 1px solid #343434;
}

.vertical .grip {
  width: auto;
  height: 8px;
  border-width: 2px 7px 2px 3px;
}

.letter {
  padding: 0;
  color: #454c59;
  font-size: 19px;
  font-weight: 600;
}

.hsep {
  height: 6px;
  border: solid #ebebeb;
  border-width: 2px 2px 3px;
  background: #999;
}

.abc {
  padding: 2px 3px;
  font: 700 7px/8px 'Liberation Sans', sans-serif;
}

.abc span {
  display: block;
}

.abc svg {
  height: 9px;
}

.frame {
  flex: 1;
  min-width: 0;
  display: flex;
  flex-direction: column;
  border: solid #fff;
  border-width: 2px 3px 1px 1px;
  border-top-color: #8e8e8e;
  border-left-color: #a5a5a5;
}

.view {
  flex: 1;
  min-height: 0;
  display: flex;
}

.canvas {
  flex: 1;
  position: relative;
  background: #fff;
}

.drawing {
  position: absolute;
  width: 100%;
  height: 100%;
  stroke: #000;
  shape-rendering: crispEdges;
}

.drawing text {
  fill: #000;
  stroke: none;
  font-size: 17px;
  font-weight: 300;
}

.view-label {
  position: absolute;
  top: 5px;
  left: 4px;
}

.cube {
  position: absolute;
  top: 10px;
  right: 13px;
  width: 100px;
}

.cube circle {
  stroke: #fcfcfc;
  stroke-width: 9px;
}

.cube rect {
  fill: #ededed;
  stroke: #8b8b8b;
}

.cube path {
  fill: #dddfe6;
  stroke: none;
}

.cube text {
  fill: #9a9a9a;
  stroke: none;
  font-size: 14px;
  text-anchor: middle;
}

.cube .face {
  fill: #858890;
  font-size: 22px;
}

.wcs {
  display: flex;
  align-items: center;
  gap: 4px;
  height: 15px;
  margin: 15px auto 0 26px;
  padding: 0 3px;
  border-radius: 3px;
  background: #e8e9f4;
  color: #828282;
  font: 11px/15px 'Liberation Sans', sans-serif;
}

.cube .wcs svg {
  width: 11px;
  height: 7px;
}

.cube .wcs path {
  fill: none;
  stroke: #b0b0b8;
}

.scroll {
  display: flex;
  flex: none;
  background: #f0f0f0;
}

.scroll button {
  flex: 0 0 17px;
  display: flex;
  align-items: center;
  justify-content: center;
}

.scroll svg {
  width: 9px;
  height: 9px;
  stroke: #555;
  stroke-width: 2px;
}

.scroll-v {
  flex-direction: column;
  width: 15px;
}

.thumb {
  flex: 0 0 17px;
  background: #cdcdcd;
}

.before { flex: 23; }
.after { flex: 25; }

.scroll-h {
  width: 432px;
}

.tabs {
  display: flex;
  flex: none;
  height: 16px;
  background: #f0f0f0;
  line-height: 16px;
  white-space: nowrap;
}

.nav {
  width: 14px;
  display: flex;
  align-items: center;
  justify-content: center;
  border: 1px solid #aaa;
  border-left-color: #fff;
}

.nav svg {
  width: 9px;
  height: 9px;
  fill: #555;
  stroke: none;
}

.edge {
  width: 10px;
  height: 16px;
  stroke: #555;
}

.edge.wide {
  width: 15px;
}

.edge .white {
  fill: #fff;
  stroke: none;
}

.tab {
  border-top: 1px solid #777;
  line-height: 14px;
}

.tab.active {
  border-top-color: #fff;
  background: #fff;
}

.tab-space {
  flex: 1;
  border-top: 1px solid #666;
  margin-right: 5px;
}

.corner {
  width: 15px;
}

/* command line */
.command {
  display: flex;
  flex: none;
  height: 53px;
  margin-top: 4px;
  border-top: 1px solid #888;
}

.command-grip {
  width: 23px;
  display: flex;
  flex-direction: column;
  align-items: center;
  justify-content: space-between;
  padding: 3px 0;
  background: linear-gradient(#9a9a9a, #4a4a4a);
}

.command-grip .grip {
  width: 17px;
  height: 6px;
  border: 0;
  background: radial-gradient(circle at 1px 1px, #ccc 1px, transparent 1px) 0 0 / 3px 3px;
}

.command-grip svg {
  width: 14px;
  height: 14px;
  stroke: #eee;
  stroke-width: 2px;
}

.command-body {
  flex: 1;
  display: flex;
  flex-direction: column;
}

.history {
  flex: 1;
  margin: 0;
  padding: 11px 2px 0;
  border-bottom: 1px solid #777;
  background: #c8c8c8;
}

.prompt {
  display: flex;
  height: 23px;
  align-items: center;
  padding-left: 5px;
  background: #fff;
}

.prompt-icon {
  display: flex;
  align-items: center;
  gap: 3px;
  margin-right: 8px;
}

.prompt-icon svg {
  width: 15px;
  height: 13px;
}

.prompt-icon .tri {
  width: 7px;
  height: 7px;
}

.prompt input {
  flex: 1;
}

/* status bar */
.status {
  display: flex;
  flex: none;
  height: 22px;
  border-top: 1px solid #000;
  background: linear-gradient(#999, #7c7c7c);
}

.coords {
  width: 218px;
  padding: 4px 0 0 12px;
  border-right: 1px solid #444;
  color: #aaa;
  font: 10px/16px 'Liberation Mono', monospace;
  white-space: nowrap;
}

.toggle {
  width: 22px;
  flex: none;
  padding: 2px;
  border-right: 1px solid #555;
  background: linear-gradient(#bdbdbd, #a2a2a2);
}

.toggle svg {
  width: 17px;
  height: 17px;
}

.toggle.on {
  background: linear-gradient(#dff2f7, #b4e0ea 48%, #8fc9d9 52%, #b8dfe8);
}

.status-space {
  flex: 1;
  border-right: 1px solid #444;
}

.status-gap {
  width: 18px;
  background: #777;
}

.status-gap.small {
  width: 5px;
}

.model {
  width: 30px;
}

.scale {
  display: flex;
  align-items: center;
  gap: 3px;
  width: 54px;
}

.scale .tri {
  width: 8px;
  height: 8px;
}

.isolate {
  width: 32px;
  padding: 1px 6px;
  border: 1px solid #555;
  box-shadow: inset 1px 1px 2px #555;
}

/* sound level meter docked to the edge */
.meter {
  position: absolute;
  right: 0;
  bottom: 46px;
  width: 10px;
  height: 59px;
  padding: 8px 1px 6px 4px;
  border-radius: 4px 0 0 4px;
  background:
    repeating-linear-gradient(transparent 0 2px, #6d7185 2px 3px) content-box,
    linear-gradient(#555 12px, #e8d35a 12px, #d8e85a 28px, #4cd8b0) content-box,
    #6d7185;
}

/* taskbar */
.taskbar {
  position: relative;
  display: flex;
  flex: none;
  height: 40px;
  background: linear-gradient(90deg, #31597a, #4c6287 12%, #6f7694 24%, #74708a 34%, #7a7890 46%, #575d80 55%, #395778 64%, #3c5f90 74%, #3d5b8b 80%, #4b5a97 88%, #3f6a8c);
}

.taskbar svg {
  stroke: none;
}

.wallpaper {
  position: absolute;
  inset: 0;
  width: 100%;
  height: 100%;
}

.taskbar button {
  position: relative;
}

.start {
  width: 52px;
  padding: 7px 12px;
}

.start svg {
  width: 26px;
  height: 26px;
  fill: #fff;
}

.app {
  width: 58px;
  height: 38px;
  margin: 1px 4px 1px 0;
  padding: 3px 12px;
  border: 1px solid transparent;
}

.app.open {
  border-color: #9fb0c6;
  background: rgba(200, 215, 235, 0.3);
}

.app svg {
  width: 32px;
  height: 32px;
}

.tray {
  display: flex;
  align-items: center;
  gap: 7px;
  margin-left: auto;
  padding-right: 17px;
  color: #fff;
}

.tray svg {
  width: 17px;
  height: 17px;
  fill: #fff;
}

.ime {
  width: 25px;
  font-size: 13px;
}

.sogou {
  width: 15px;
  height: 15px;
  margin-right: 13px;
  border-radius: 3px;
  background: #f04b1c;
  font-size: 14px;
  font-weight: 700;
  line-height: 14px;
}

.clock {
  display: flex;
  flex-direction: column;
  align-items: center;
  line-height: 18px;
}
```
